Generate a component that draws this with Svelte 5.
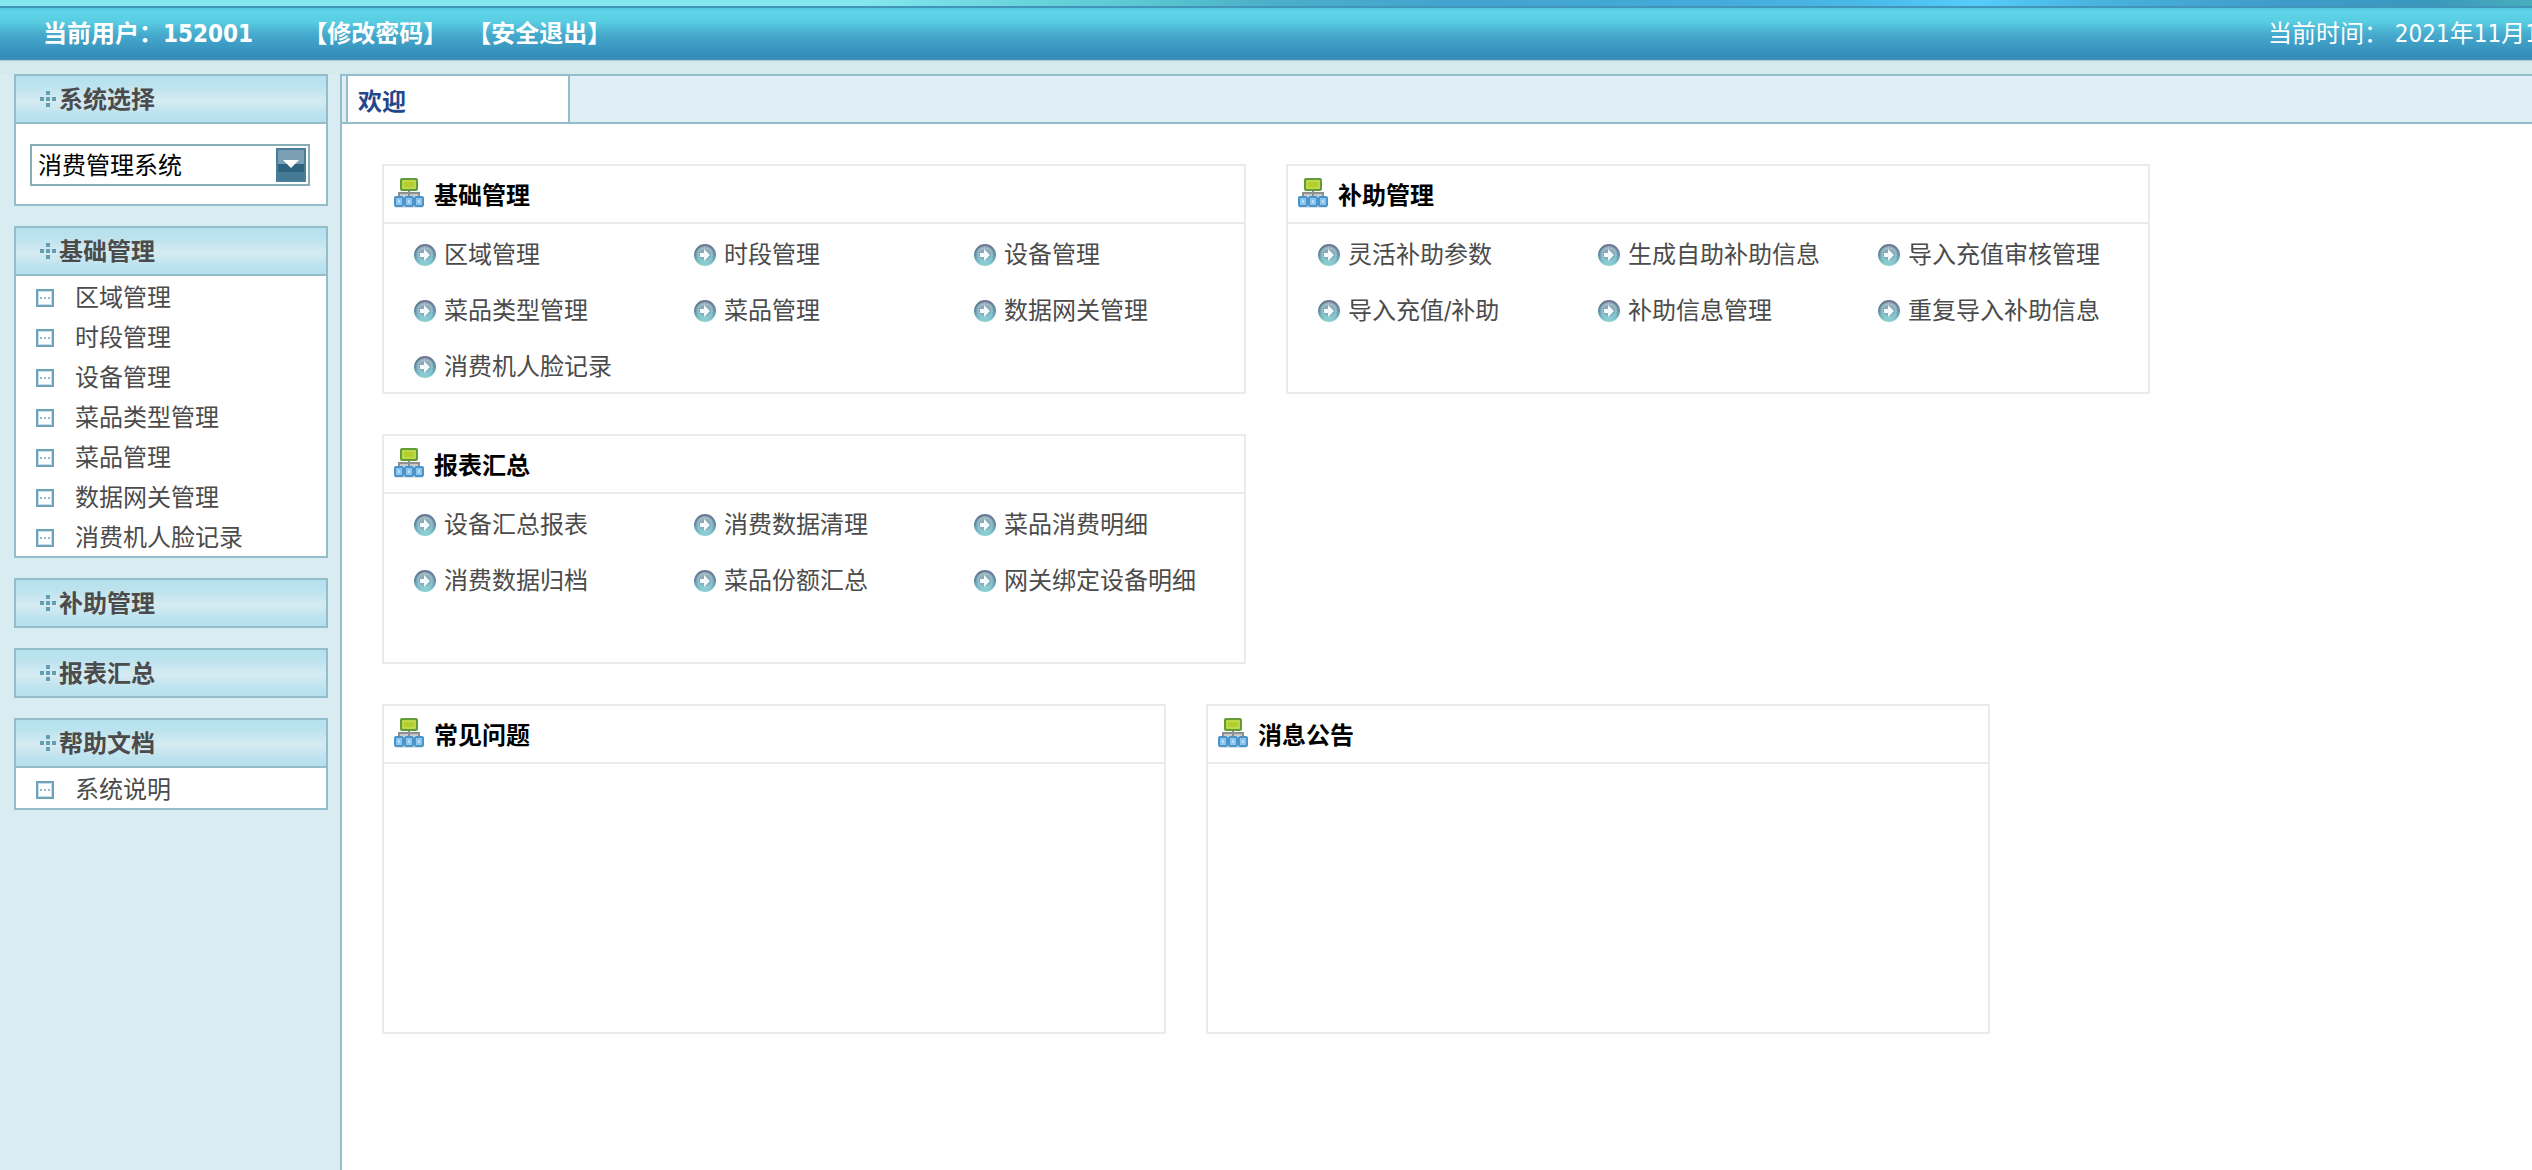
<script>
  const user = '152001';
  let system = '消费管理系统';

  const sideMenus = [
    {
      title: '基础管理',
      items: ['区域管理', '时段管理', '设备管理', '菜品类型管理', '菜品管理', '数据网关管理', '消费机人脸记录']
    },
    { title: '补助管理', items: [] },
    { title: '报表汇总', items: [] },
    { title: '帮助文档', items: ['系统说明'] }
  ];

  const cards = [
    {
      title: '基础管理',
      items: ['区域管理', '时段管理', '设备管理', '菜品类型管理', '菜品管理', '数据网关管理', '消费机人脸记录']
    },
    {
      title: '补助管理',
      items: ['灵活补助参数', '生成自助补助信息', '导入充值审核管理', '导入充值/补助', '补助信息管理', '重复导入补助信息']
    },
    {
      title: '报表汇总',
      items: ['设备汇总报表', '消费数据清理', '菜品消费明细', '消费数据归档', '菜品份额汇总', '网关绑定设备明细']
    }
  ];

  const notices = ['常见问题', '消息公告'];
</script>

<svelte:head>
  <title>消费管理系统</title>
</svelte:head>

{#snippet dots()}
  <svg class="dots" viewBox="0 0 16 16" aria-hidden="true">
    <rect x="6" y="0" width="4" height="4" />
    <rect x="0" y="6" width="4" height="4" />
    <rect x="6" y="6" width="4" height="4" />
    <rect x="12" y="6" width="4" height="4" />
    <rect x="6" y="12" width="4" height="4" />
  </svg>
{/snippet}

{#snippet cardHead(title)}
  <header class="card-head">
    <svg class="org" viewBox="0 0 30 30" aria-hidden="true">
      <path d="M4 14h22v4H4z" fill="#c9caca" />
      <path d="M15 12v6M5 18v-3h20v3" fill="none" stroke="#8d9090" stroke-width="2" />
      <rect x="7" y="1" width="16" height="11" rx="1" fill="#a5cc26" stroke="#629c38" stroke-width="2" />
      <rect x="9" y="3" width="12" height="7" fill="#b2cf2b" stroke="#cfe070" stroke-width="1" />
      <rect x="1" y="28" width="28" height="2" fill="#e0e5ea" />
      {#each [0, 10, 20] as x}
        <rect x={x} y="18" width="10" height="11" rx="2" fill="#4a94ca" />
        <rect x={x + 2} y="20" width="6" height="7" fill="#8cc4ee" />
        <rect x={x + 4} y="22" width="2" height="3" fill="#b9dffa" />
      {/each}
    </svg>
    <h2>{title}</h2>
  </header>
{/snippet}

<!-- Shared gradients for the round bullets -->
<svg class="defs" width="0" height="0" aria-hidden="true">
  <defs>
    <linearGradient id="ring" x1="0" y1="0" x2="0" y2="1">
      <stop offset="0" stop-color="#6b7594" />
      <stop offset="0.5" stop-color="#6090aa" />
      <stop offset="1" stop-color="#8fcfd0" />
    </linearGradient>
    <linearGradient id="disc" x1="0" y1="0" x2="0" y2="1">
      <stop offset="0" stop-color="#9fb0b8" />
      <stop offset="0.5" stop-color="#7aa6b8" />
      <stop offset="1" stop-color="#7fdcdc" />
    </linearGradient>
  </defs>
</svg>

<div class="page">
  <div class="banner"></div>
  <div class="topbar">
    <span class="user">当前用户：{user}</span>
    <nav class="links">
      <a href="#password">【修改密码】</a>
      <a href="#logout">【安全退出】</a>
    </nav>
    <span class="clock">当前时间： 2021年11月1</span>
  </div>

  <div class="layout">
    <aside>
      <section class="panel">
        <h3>{@render dots()}<label for="system">系统选择</label></h3>
        <div class="chooser">
          <div class="select-box">
            <select id="system" bind:value={system}>
              <option>消费管理系统</option>
            </select>
            <svg class="arrow" viewBox="0 0 30 34" aria-hidden="true">
              <rect width="30" height="34" fill="#4b7d98" />
              <rect x="2" y="2" width="26" height="14" fill="#7a9fb5" />
              <rect x="2" y="16" width="26" height="8" fill="#2f6480" />
              <rect x="2" y="24" width="26" height="8" fill="#447a94" />
              <path d="M7 12h16l-8 8z" fill="#fff" />
            </svg>
          </div>
        </div>
      </section>

      {#each sideMenus as menu}
        <section class="panel">
          <h3>{@render dots()}{menu.title}</h3>
          {#if menu.items.length}
            <ul class="menu">
              {#each menu.items as item}
                <li>
                  <svg class="box" viewBox="0 0 18 18" aria-hidden="true">
                    <rect x="1" y="1" width="16" height="16" fill="#fff" stroke="#6ba4b9" stroke-width="2" />
                    <rect x="2.5" y="2.5" width="13" height="13" fill="none" stroke="#c9dee6" />
                    <path d="M4 8h2v2h-2zM8 8h2v2h-2zM12 8h2v2h-2z" fill="#8fb9c8" />
                  </svg>
                  <a href="#{item}">{item}</a>
                </li>
              {/each}
            </ul>
          {/if}
        </section>
      {/each}
    </aside>

    <main>
      <div class="tabs">
        <button type="button" class="tab">欢迎</button>
      </div>

      <div class="content">
        <div class="cards">
          {#each cards as card}
            <section class="card">
              {@render cardHead(card.title)}
              <ul class="entries">
                {#each card.items as item}
                  <li>
                    <svg class="bullet" viewBox="0 0 22 22" aria-hidden="true">
                      <circle cx="11" cy="11" r="10" fill="url(#disc)" stroke="url(#ring)" stroke-width="2" />
                      <circle cx="11" cy="11" r="7" fill="none" stroke="#a9cad3" stroke-width="1" />
                      <path d="M6 9h4V5l6 6l-6 6v-4H6z" fill="#f4fafb" />
                    </svg>
                    <a href="#{item}">{item}</a>
                  </li>
                {/each}
              </ul>
            </section>
          {/each}
        </div>

        <div class="cards">
          {#each notices as title}
            <section class="card notice">
              {@render cardHead(title)}
            </section>
          {/each}
        </div>
      </div>
    </main>
  </div>
</div>

<style>
  :global(body) {
    margin: 0;
    background: #d9ecf2;
  }

  .page {
    display: flex;
    flex-direction: column;
    min-height: 100vh;
    font-family: 'DejaVu Sans Condensed', 'Noto Sans CJK SC', sans-serif;
    font-size: 24px;
    line-height: 36px;
    color: #4b4b4b;
  }

  .page * {
    box-sizing: border-box;
  }

  .defs {
    display: block;
  }

  a {
    color: inherit;
    text-decoration: none;
  }

  ul {
    list-style: none;
    margin: 0;
    padding: 0;
  }

  svg {
    flex: none;
  }

  /* Header */
  .banner {
    height: 6px;
    background: linear-gradient(
      to right,
      #84e8ee 0%,
      #84e8ee 34%,
      #6fd8e0 39%,
      #5cc8d2 45%,
      #4bb0c8 50%,
      #41a3d0 58%,
      #46abdb 68%,
      #4abbea 74%,
      #55cdfb 78%,
      #49b2de 83%,
      #3f9bcb 90%,
      #3c97bc 96%,
      #48aebc 100%
    );
  }

  .topbar {
    display: flex;
    align-items: center;
    height: 55px;
    padding-left: 43px;
    border-top: 2px solid #4095b8;
    border-bottom: 1px solid #a5cddb;
    background: linear-gradient(#56c8de, #5dd5ea 8%, #59cde2 26%, #45a9cc 52%, #348bb9 94%, #4391bb);
    color: #fff;
    overflow: hidden;
    white-space: nowrap;
  }

  .user,
  .links {
    font-weight: bold;
  }

  .links {
    display: flex;
    gap: 20px;
    margin-left: 50px;
  }

  /* The date runs off the right edge of the bar */
  .clock {
    flex: 0 0 264px;
    min-width: 0;
    width: 264px;
    margin-left: auto;
  }

  .layout {
    display: flex;
    flex: 1;
    border-top: 13px solid #d3ebec;
  }

  /* Sidebar */
  aside {
    display: flex;
    flex-direction: column;
    gap: 20px;
    flex: 0 0 340px;
    padding: 0 12px 20px 14px;
  }

  .panel {
    border: 2px solid #93bdca;
    background: #fff;
  }

  h3 {
    display: flex;
    align-items: center;
    gap: 3px;
    height: 46px;
    margin: 0;
    padding: 2px 0 0 24px;
    background: linear-gradient(#b5e1ee, #bbe3ee 20%, #d6ebf1 54%, #bbe2ef 84%, #b5e0ed);
    font-size: 24px;
  }

  .dots {
    width: 16px;
    height: 16px;
    margin-bottom: 2px;
    fill: #649eb5;
  }

  .menu,
  .chooser {
    border-top: 2px solid #93bdca;
  }

  .chooser {
    padding: 20px 16px 18px 14px;
  }

  .select-box {
    position: relative;
    height: 42px;
    border: 2px solid #87adb5;
  }

  select {
    appearance: none;
    display: block;
    width: 100%;
    height: 100%;
    padding: 2px 36px 0 6px;
    border: 0;
    border-radius: 0;
    background: #fff;
    color: #000;
    font: inherit;
    outline: none;
  }

  .arrow {
    position: absolute;
    top: 2px;
    right: 2px;
    width: 30px;
    height: 34px;
    pointer-events: none;
  }

  .menu li {
    display: flex;
    align-items: center;
    gap: 21px;
    height: 40px;
    padding: 3px 0 0 20px;
  }

  .box {
    width: 18px;
    height: 18px;
  }

  /* Main area */
  main {
    flex: 1;
    min-width: 0;
    border-left: 2px solid #93bdca;
    background: #fff;
  }

  .tabs {
    display: flex;
    height: 50px;
    padding-left: 4px;
    border-top: 2px solid #93bdca;
    border-bottom: 2px solid #93bdca;
    background: #e0eff6;
  }

  .tab {
    width: 224px;
    padding: 6px 10px 0;
    border: 0;
    border-left: 2px solid #93bdca;
    border-right: 2px solid #93bdca;
    background: #fff;
    color: #25478a;
    font: inherit;
    font-weight: bold;
    text-align: left;
  }

  .content {
    display: flex;
    flex-direction: column;
    gap: 40px;
    padding: 40px;
  }

  .cards {
    display: flex;
    flex-wrap: wrap;
    gap: 40px;
  }

  .card {
    width: 864px;
    min-height: 230px;
    border: 2px solid #ebebeb;
  }

  .notice {
    width: 784px;
    min-height: 330px;
  }

  .card-head {
    display: flex;
    align-items: center;
    gap: 10px;
    height: 58px;
    padding: 4px 10px 0;
    border-bottom: 2px solid #ebebeb;
  }

  .org {
    width: 30px;
    height: 30px;
    margin-bottom: 6px;
  }

  h2 {
    margin: 0;
    color: #000;
    font-size: 24px;
  }

  .entries {
    display: grid;
    grid-template-columns: 280px 280px 1fr;
    grid-auto-rows: 56px;
    padding-left: 30px;
    white-space: nowrap;
  }

  .entries li {
    display: flex;
    align-items: center;
    gap: 8px;
    padding-top: 5px;
  }

  .bullet {
    width: 22px;
    height: 22px;
  }
</style>
